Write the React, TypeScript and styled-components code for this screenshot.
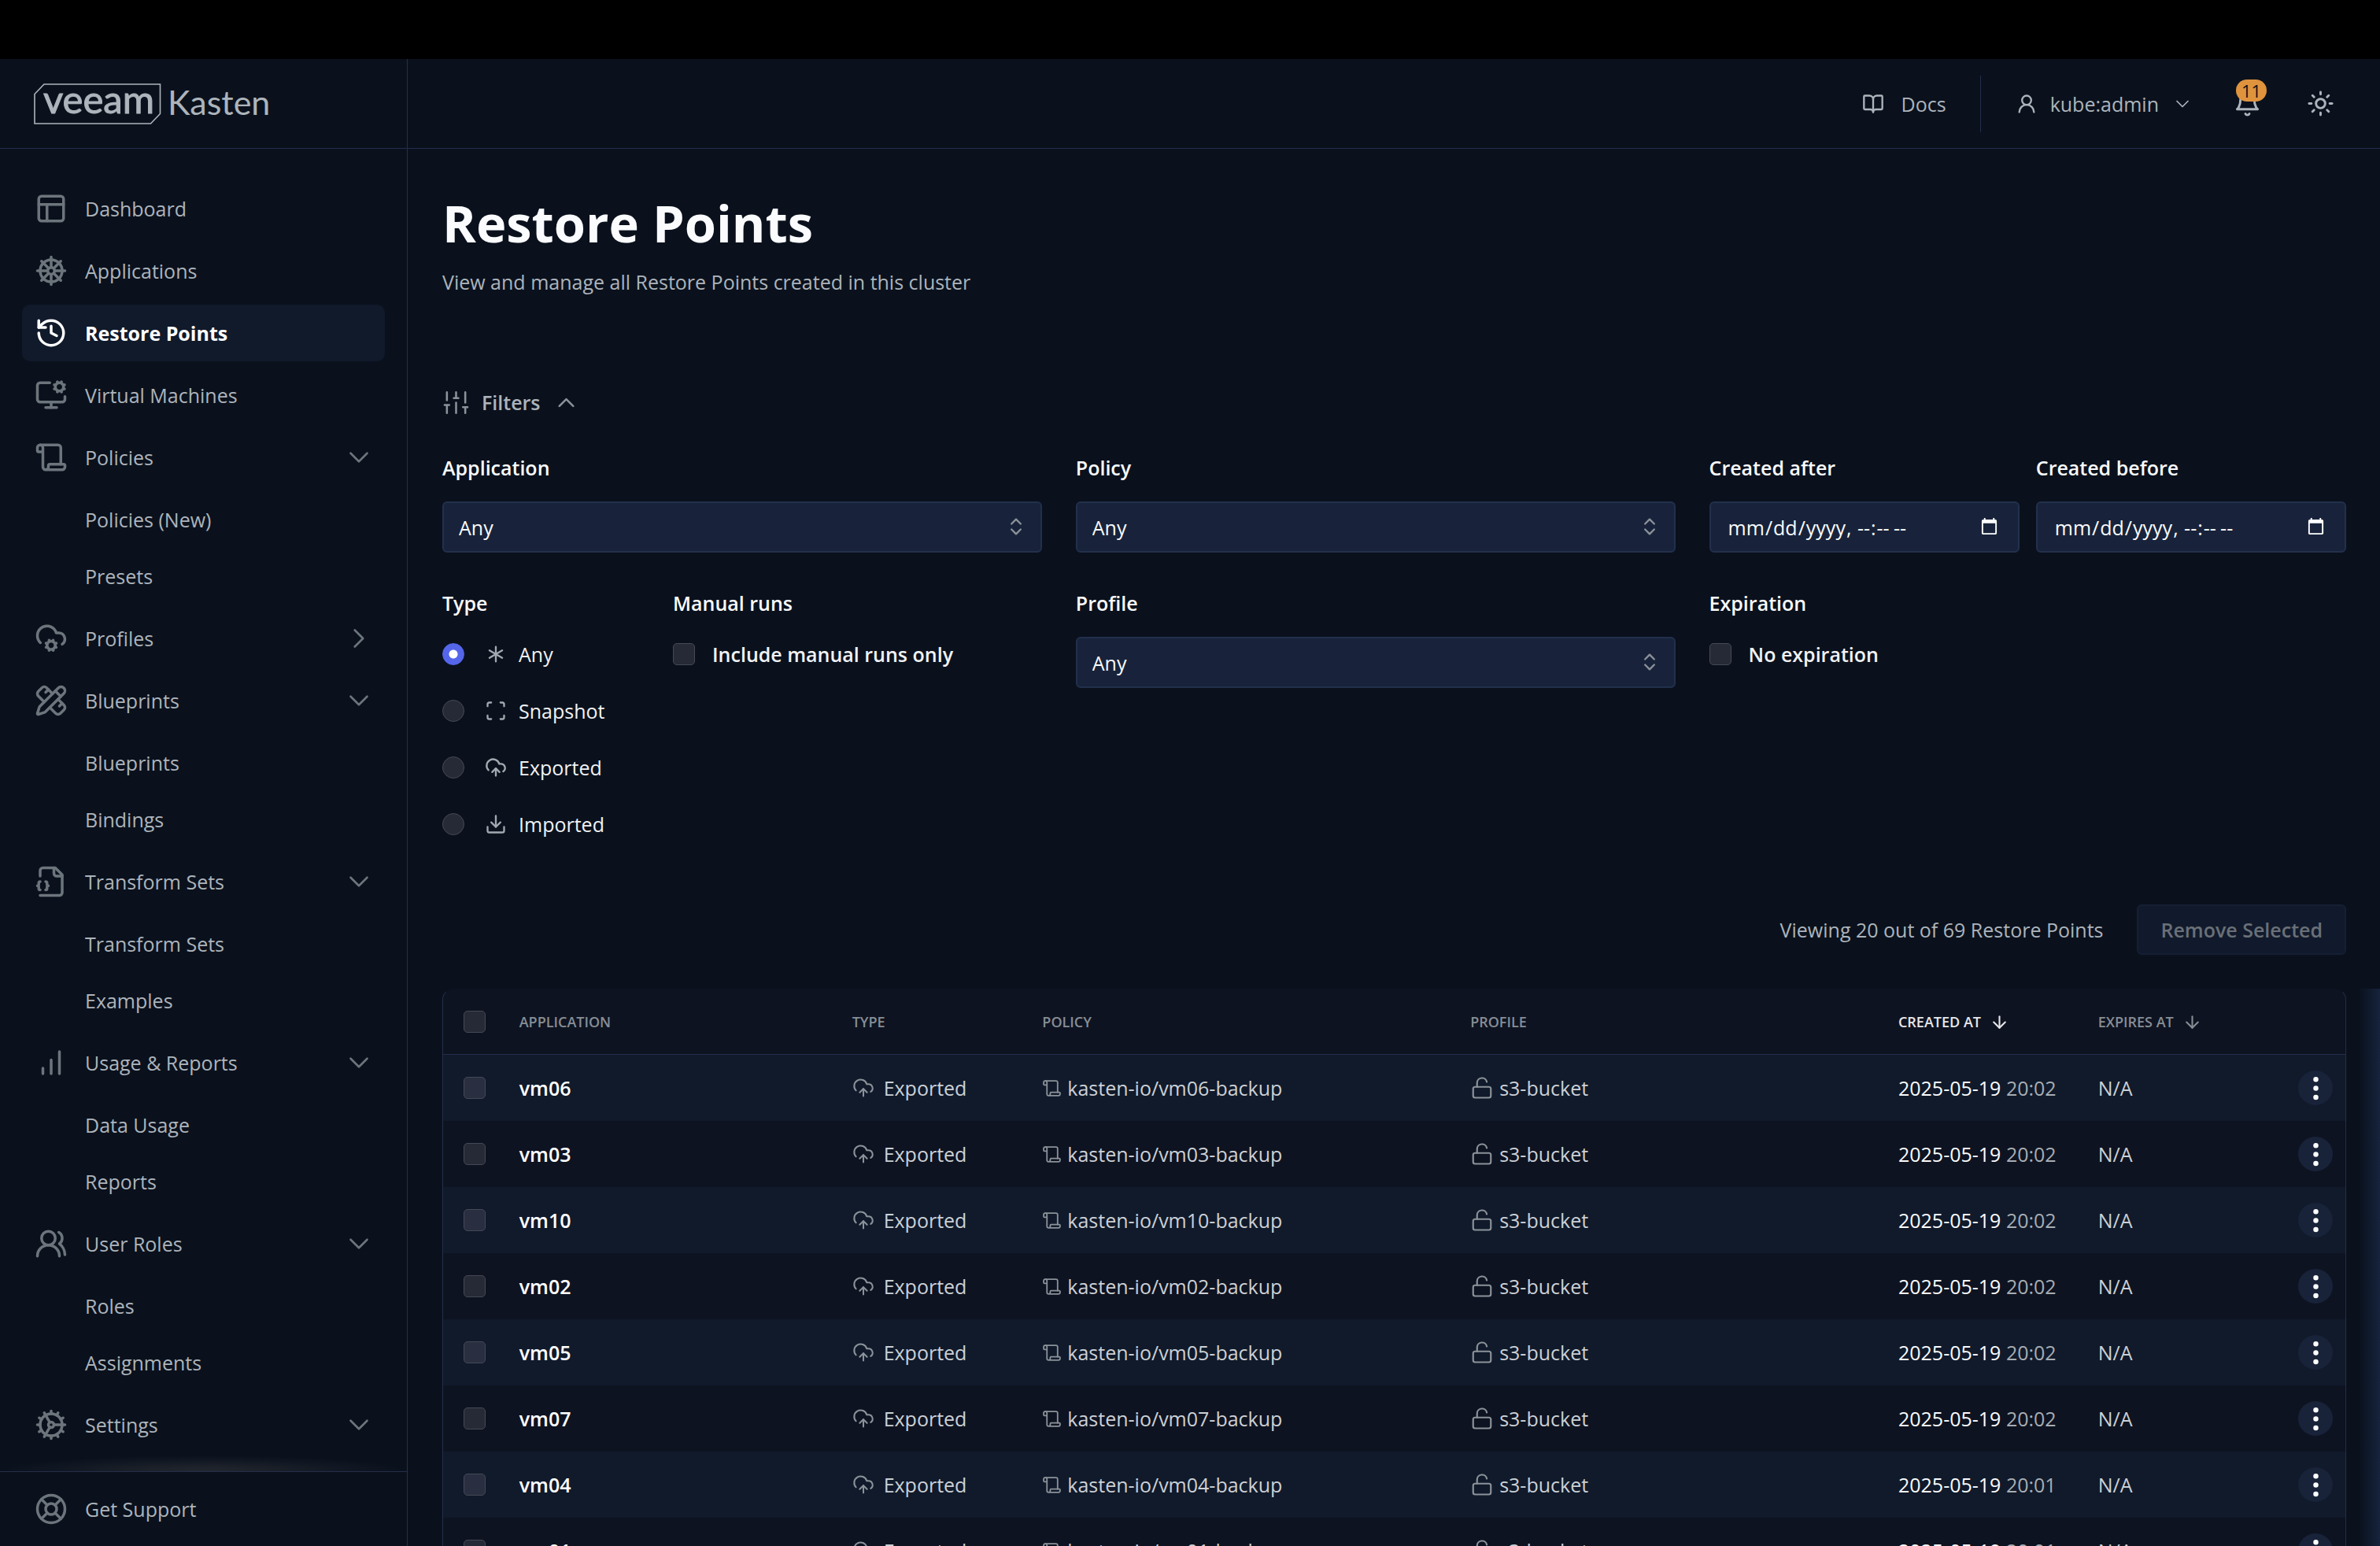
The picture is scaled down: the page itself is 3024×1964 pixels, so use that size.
import React from 'react';
import styled, { createGlobalStyle, css } from 'styled-components';
import {
  ArrowDown,
  BookOpen,
  ChevronDown,
  ChevronRight,
  ChevronUp,
  ChevronsUpDown,
  CloudCog,
  CloudUpload,
  Cog,
  Download,
  EllipsisVertical,
  History,
  LifeBuoy,
  LockOpen,
  MonitorCog,
  PanelsTopLeft,
  PencilRuler,
  Scan,
  Scroll,
  ShipWheel,
  Sun,
  UserRound,
  UsersRound,
} from 'lucide-react';

const color = {
  bg: '#0a111d',
  line: '#242e4a',
  text: '#adb4bb',
  muted: '#6d757c',
  white: '#fafbfc',
  field: '#18233b',
  fieldLine: '#22304c',
  active: '#101a2b',
  rowOdd: '#101a2b',
  rowEven: '#0e1321',
  box: '#262a36',
  boxLine: '#454955',
  badge: '#df933d',
  accent: '#5566ea',
};

const GlobalStyle = createGlobalStyle`
  *, *::before, *::after { box-sizing: border-box; }
  body {
    margin: 0;
    background: #000;
    color: ${color.text};
    font-family: 'Open Sans', 'Noto Sans', sans-serif;
    font-size: 25px;
    line-height: 36px;
  }
  button, input, select { font: inherit; color: inherit; }
  button { cursor: pointer; }
  a { color: inherit; text-decoration: none; }
  svg { display: block; flex: none; }
`;

/* ---------- shell ---------- */

const Shell = styled.div`
  display: grid;
  grid-template-columns: 518px minmax(0, 1fr);
  height: 100vh;
  padding-top: 75px;
  overflow: hidden;
`;

const Sidebar = styled.aside`
  display: flex;
  flex-direction: column;
  min-height: 0;
  background: ${color.bg};
  border-right: 1px solid ${color.line};
`;

const Page = styled.div`
  display: flex;
  flex-direction: column;
  min-width: 0;
  min-height: 0;
  background: ${color.bg};
`;

const bar = css`
  display: flex;
  flex: none;
  align-items: center;
  height: 114px;
  border-bottom: 1px solid ${color.line};
`;

const Brand = styled.a`
  ${bar}
  padding-left: 43px;
`;

const BrandText = styled.text`
  font-family: Lato, 'Open Sans', sans-serif;
  fill: ${color.text};
`;

/* ---------- navigation ---------- */

const Nav = styled.nav`
  flex: 1;
  min-height: 0;
  overflow: hidden;
  padding: 40px 28px 0;
  background: radial-gradient(closest-side, #23272f, transparent) 50% calc(100% + 20px) / 100% 40px no-repeat;
`;

const NavList = styled.ul`
  display: flex;
  flex-direction: column;
  gap: 7px;
  margin: 0;
  padding: 0;
  list-style: none;
`;

const SubList = styled.ul`
  margin: 7px 0 0;
  padding: 0;
  list-style: none;
`;

const NavLink = styled.a<{ $active?: boolean; $sub?: boolean }>`
  display: flex;
  align-items: center;
  gap: 22px;
  height: 72px;
  padding: 0 12px 0 ${(p) => (p.$sub ? '80px' : '16px')};
  border-radius: 10px;
  background: ${(p) => (p.$active ? color.active : 'transparent')};
  color: ${(p) => (p.$active ? '#fff' : color.text)};
  font-weight: ${(p) => (p.$active ? 700 : 400)};

  svg {
    color: ${(p) => (p.$active ? '#fff' : color.muted)};
  }
`;

const NavLabel = styled.span`
  flex: 1;
`;

const SidebarFooter = styled.div`
  flex: none;
  padding: 11px 28px;
  border-top: 1px solid ${color.line};
`;

/* ---------- top bar ---------- */

const TopBar = styled.header`
  ${bar}
  justify-content: flex-end;
  padding-right: 58px;
`;

const TopLink = styled.a`
  display: flex;
  align-items: center;
  gap: 22px;
  height: 72px;
  padding-right: 43px;
  border-right: 1px solid ${color.line};
`;

const BarButton = styled.button`
  display: flex;
  align-items: center;
  gap: 16px;
  padding: 0;
  border: 0;
  background: none;
`;

const UserButton = styled(BarButton)`
  margin: 0 51px 0 44px;
`;

const BellButton = styled(BarButton)`
  position: relative;
  margin-right: 58px;
`;

const Badge = styled.span`
  position: absolute;
  top: -13px;
  left: 3px;
  padding: 0 7px;
  border-radius: 14px;
  background: ${color.badge};
  color: #10131a;
  font-size: 22px;
  font-weight: 500;
  line-height: 28px;
`;

/* ---------- page content ---------- */

const Main = styled.main`
  flex: 1;
  min-height: 0;
  overflow: hidden;
  padding: 44px 43px 0 44px;
`;

const Title = styled.h1`
  margin: 0;
  color: ${color.white};
  font-size: 65px;
  line-height: 100px;
  font-weight: 700;
`;

const Subtitle = styled.p`
  margin: 7px 0 117px;
`;

const FiltersToggle = styled.button`
  display: flex;
  align-items: center;
  gap: 15px;
  padding: 0;
  border: 0;
  background: none;
  font-weight: 600;

  svg { color: #8b9299; }
`;

const FilterForm = styled.form`
  display: grid;
  grid-template-columns: minmax(0, 16fr) minmax(0, 16fr) minmax(0, 17fr);
  gap: 46px 43px;
  margin-top: 47px;
`;

const Pair = styled.div<{ $columns: string; $gap?: number }>`
  display: grid;
  grid-template-columns: ${(p) => p.$columns};
  gap: ${(p) => p.$gap ?? 0}px;
`;

const Field = styled.div`
  display: flex;
  flex-direction: column;
  min-width: 0;
`;

const fieldTitle = css`
  margin: 0 0 25px;
  padding: 0;
  color: ${color.white};
  font-weight: 600;
  line-height: 36px;
`;

const FieldLabel = styled.label`
  ${fieldTitle}
`;

const Group = styled.fieldset`
  margin: 0;
  padding: 0;
  border: 0;
`;

const Legend = styled.legend`
  ${fieldTitle}
  margin-bottom: 11px;
`;

const inputBox = css`
  width: 100%;
  height: 65px;
  border: 2px solid ${color.fieldLine};
  border-radius: 6px;
  background: ${color.field};
  color: ${color.white};
`;

const SelectWrap = styled.div`
  position: relative;

  svg {
    position: absolute;
    top: 18px;
    right: 19px;
    color: #8b9299;
    pointer-events: none;
  }
`;

const Select = styled.select`
  ${inputBox}
  appearance: none;
  padding: 0 60px 0 19px;
`;

const DateInput = styled.input`
  ${inputBox}
  padding: 0 22px 0 21px;
  color-scheme: dark;
`;

const Option = styled.label<{ $strong?: boolean }>`
  display: flex;
  align-items: center;
  height: 72px;
  gap: 22px;
  color: #f1f2f4;
  font-weight: ${(p) => (p.$strong ? 600 : 400)};
`;

const OptionText = styled.span`
  display: flex;
  align-items: center;
  gap: 15px;
  padding-left: 4px;

  svg { color: #a3a9b0; }
`;

const mark = css`
  flex: none;
  appearance: none;
  width: 28px;
  height: 28px;
  margin: 0;
  border: 1px solid ${color.boxLine};
  background: ${color.box};
`;

const Radio = styled.input`
  ${mark}
  border-radius: 50%;

  &:checked {
    border-color: ${color.accent};
    background: radial-gradient(circle, #fff 5px, ${color.accent} 6px);
  }
`;

const Checkbox = styled.input`
  ${mark}
  display: block;
  border-radius: 5px;
`;

const ResultsBar = styled.div`
  display: flex;
  align-items: center;
  justify-content: flex-end;
  gap: 43px;
  margin: 66px 0 43px;
`;

const RemoveButton = styled.button`
  height: 64px;
  padding: 0 28px;
  border: 2px solid #151f33;
  border-radius: 6px;
  background: #111a2c;
  color: #6a7078;
  font-weight: 600;
`;

/* ---------- table ---------- */

const TableArea = styled.section`
  margin-right: -43px;
  padding-right: 43px;
  background: linear-gradient(to left, #16233d, ${color.bg} 27px);
`;

const TableFrame = styled.div`
  overflow: hidden;
  border: 1px solid ${color.line};
  border-top-color: ${color.rowEven};
  border-radius: 14px 14px 0 0;
  background: ${color.rowEven};
`;

const Table = styled.table`
  width: 100%;
  table-layout: fixed;
  border-collapse: separate;
  border-spacing: 0;
  text-align: left;
`;

const Column = styled.col<{ $width: string }>`
  width: ${(p) => p.$width};
`;

const Th = styled.th<{ $current?: boolean }>`
  height: 83px;
  padding: 0;
  border-bottom: 1px solid ${color.line};
  color: ${(p) => (p.$current ? '#e6e8ea' : '#878e95')};
  font-size: 18px;
  font-weight: 600;
  text-transform: uppercase;
`;

const SortButton = styled.button`
  display: flex;
  align-items: center;
  gap: 11px;
  padding: 0;
  border: 0;
  background: none;
  text-transform: uppercase;
`;

const Row = styled.tr`
  background: ${color.rowEven};

  &:nth-child(odd) { background: ${color.rowOdd}; }
  &:nth-child(odd) input { background: #292e40; }
`;

const cell = css`
  height: 84px;
  padding: 0;
  white-space: nowrap;
`;

const Td = styled.td`
  ${cell}
  color: #ccd0d5;
`;

const CheckTd = styled.td`
  padding: 0 0 0 26px;
`;

const CheckTh = styled(Th)`
  padding-left: 26px;
`;

const NameTh = styled.th`
  ${cell}
  color: #fff;
  font-weight: 600;
`;

const IconText = styled.span<{ $gap: number }>`
  display: flex;
  align-items: center;
  gap: ${(p) => p.$gap}px;

  svg { color: #8b9299; }
`;

const DateText = styled.time`
  color: ${color.white};
`;

const TimeText = styled.span`
  color: #a7adb4;
`;

const RowMenu = styled.button`
  display: grid;
  place-items: center;
  width: 44px;
  height: 44px;
  margin: 0 16px 0 auto;
  padding: 0;
  border: 0;
  border-radius: 50%;
  background: #18233a;
  color: #fff;
`;

/* ---------- icons ---------- */

type IconProps = { size?: number };

const Glyph = ({ size = 42, stroke = 2, children }: IconProps & { stroke?: number; children: React.ReactNode }) => (
  <svg
    width={size}
    height={size}
    viewBox="0 0 24 24"
    fill="none"
    stroke="currentColor"
    strokeWidth={stroke}
    strokeLinecap="round"
    strokeLinejoin="round"
    aria-hidden="true"
  >
    {children}
  </svg>
);

const FileBraces = ({ size }: IconProps) => (
  <Glyph size={size}>
    <path d="M4 22h14a2 2 0 0 0 2-2V7l-5-5H6a2 2 0 0 0-2 2v4" />
    <path d="M14 2v4a2 2 0 0 0 2 2h4" />
    <path d="M4 12a1 1 0 0 0-1 1v1a1 1 0 0 1-1 1 1 1 0 0 1 1 1v1a1 1 0 0 0 1 1" />
    <path d="M8 18a1 1 0 0 0 1-1v-1a1 1 0 0 1 1-1 1 1 0 0 1-1-1v-1a1 1 0 0 0-1-1" />
  </Glyph>
);

const Bars = ({ size }: IconProps) => (
  <Glyph size={size}>
    <path d="M6 20v-4M12 20V10M18 20V4" />
  </Glyph>
);

const Sliders = ({ size }: IconProps) => (
  <Glyph size={size} stroke={1.75}>
    <path d="M4 21v-7M4 10V3M12 21v-9M12 8V3M20 21v-5M20 12V3M2 14h4M10 8h4M18 16h4" />
  </Glyph>
);

const Star = ({ size }: IconProps) => (
  <Glyph size={size}>
    <path d="M12 4v16M5.070 8l13.860 8M5.070 16l13.860-8" />
  </Glyph>
);

const BellIcon = ({ size }: IconProps) => (
  <Glyph size={size}>
    <path d="M6 8a6 6 0 0 1 12 0c0 7 3 9 3 9H3s3-2 3-9" />
    <path d="M10.3 21a1.94 1.94 0 0 0 3.4 0" />
  </Glyph>
);

const Logo = () => (
  <svg width="310" height="84" viewBox="0 -16 310 84" role="img" aria-label="veeam Kasten">
    <path d="M1 13.500 13 1h147.500v37.500L148.500 51H1z" fill="none" stroke={color.text} strokeWidth="1.6" />
    <BrandText x="12" y="38" fontSize="49" fontWeight="400" stroke={color.text} strokeWidth="1">veeam</BrandText>
    <BrandText x="170" y="40" fontSize="43" fontWeight="400">Kasten</BrandText>
  </svg>
);

/* ---------- data ---------- */

type NavEntry = {
  label: string;
  icon: React.ComponentType<{ size?: number }>;
  active?: boolean;
  closed?: boolean;
  open?: boolean;
  items?: string[];
};

const navigation: NavEntry[] = [
  { label: 'Dashboard', icon: PanelsTopLeft },
  { label: 'Applications', icon: ShipWheel },
  { label: 'Restore Points', icon: History, active: true },
  { label: 'Virtual Machines', icon: MonitorCog },
  { label: 'Policies', icon: Scroll, open: true, items: ['Policies (New)', 'Presets'] },
  { label: 'Profiles', icon: CloudCog, closed: true },
  { label: 'Blueprints', icon: PencilRuler, open: true, items: ['Blueprints', 'Bindings'] },
  { label: 'Transform Sets', icon: FileBraces, open: true, items: ['Transform Sets', 'Examples'] },
  { label: 'Usage & Reports', icon: Bars, open: true, items: ['Data Usage', 'Reports'] },
  { label: 'User Roles', icon: UsersRound, open: true, items: ['Roles', 'Assignments'] },
  { label: 'Settings', icon: Cog, open: true },
];

const types = [
  { label: 'Any', icon: Star },
  { label: 'Snapshot', icon: Scan },
  { label: 'Exported', icon: CloudUpload },
  { label: 'Imported', icon: Download },
];

const restorePoints = [
  { app: 'vm06', time: '20:02' },
  { app: 'vm03', time: '20:02' },
  { app: 'vm10', time: '20:02' },
  { app: 'vm02', time: '20:02' },
  { app: 'vm05', time: '20:02' },
  { app: 'vm07', time: '20:02' },
  { app: 'vm04', time: '20:01' },
  { app: 'vm01', time: '20:01' },
];

const columnWidths = ['4%', '17.5%', '10%', '22.5%', '22.5%', '10.5%', '8%', '5%'];

/* ---------- parts ---------- */

const SelectField = ({ id, label }: { id: string; label: string }) => (
  <Field>
    <FieldLabel htmlFor={id}>{label}</FieldLabel>
    <SelectWrap>
      <Select id={id} defaultValue="any">
        <option value="any">Any</option>
      </Select>
      <ChevronsUpDown size={28} />
    </SelectWrap>
  </Field>
);

const DateField = ({ id, label }: { id: string; label: string }) => (
  <Field>
    <FieldLabel htmlFor={id}>{label}</FieldLabel>
    <DateInput id={id} type="datetime-local" />
  </Field>
);

const CheckGroup = ({ title, label }: { title: string; label: string }) => (
  <Group>
    <Legend>{title}</Legend>
    <Option $strong>
      <Checkbox type="checkbox" />
      {label}
    </Option>
  </Group>
);

export default function App() {
  return (
    <>
      <GlobalStyle />
      <Shell>
        <Sidebar>
          <Brand href="#home">
            <Logo />
          </Brand>
          <Nav aria-label="Main">
            <NavList>
              {navigation.map(({ label, icon: Icon, active, open, closed, items }) => (
                <li key={label}>
                  <NavLink href="#" $active={active} aria-current={active ? 'page' : undefined}>
                    <Icon size={42} />
                    <NavLabel>{label}</NavLabel>
                    {open && <ChevronDown size={42} strokeWidth={1.5} />}
                    {closed && <ChevronRight size={42} strokeWidth={1.5} />}
                  </NavLink>
                  {items && (
                    <SubList>
                      {items.map((item) => (
                        <li key={item}>
                          <NavLink href="#" $sub>{item}</NavLink>
                        </li>
                      ))}
                    </SubList>
                  )}
                </li>
              ))}
            </NavList>
          </Nav>
          <SidebarFooter>
            <NavLink href="#support">
              <LifeBuoy size={42} />
              <NavLabel>Get Support</NavLabel>
            </NavLink>
          </SidebarFooter>
        </Sidebar>

        <Page>
          <TopBar>
            <TopLink href="#docs">
              <BookOpen size={28} />
              Docs
            </TopLink>
            <UserButton type="button">
              <UserRound size={28} />
              kube:admin
              <ChevronDown size={28} strokeWidth={1.5} />
            </UserButton>
            <BellButton type="button" aria-label="Notifications">
              <BellIcon size={35} />
              <Badge>11</Badge>
            </BellButton>
            <BarButton type="button" aria-label="Toggle theme">
              <Sun size={35} />
            </BarButton>
          </TopBar>

          <Main>
            <Title>Restore Points</Title>
            <Subtitle>View and manage all Restore Points created in this cluster</Subtitle>

            <FiltersToggle type="button" aria-expanded="true">
              <Sliders size={35} />
              Filters
              <ChevronUp size={35} strokeWidth={1.75} />
            </FiltersToggle>

            <FilterForm>
              <SelectField id="application" label="Application" />
              <SelectField id="policy" label="Policy" />
              <Pair $columns="1fr 1fr" $gap={21}>
                <DateField id="created-after" label="Created after" />
                <DateField id="created-before" label="Created before" />
              </Pair>

              <Pair $columns="5fr 8fr">
                <Group>
                  <Legend>Type</Legend>
                  {types.map(({ label, icon: Icon }, index) => (
                    <Option key={label}>
                      <Radio type="radio" name="type" defaultChecked={index === 0} />
                      <OptionText>
                        <Icon size={28} />
                        {label}
                      </OptionText>
                    </Option>
                  ))}
                </Group>
                <CheckGroup title="Manual runs" label="Include manual runs only" />
              </Pair>
              <SelectField id="profile" label="Profile" />
              <CheckGroup title="Expiration" label="No expiration" />
            </FilterForm>

            <ResultsBar>
              <span>Viewing 20 out of 69 Restore Points</span>
              <RemoveButton type="button" disabled>Remove Selected</RemoveButton>
            </ResultsBar>

            <TableArea>
              <TableFrame>
                <Table>
                  <colgroup>
                    {columnWidths.map((width, index) => (
                      <Column key={index} $width={width} />
                    ))}
                  </colgroup>
                  <thead>
                    <tr>
                      <CheckTh><Checkbox type="checkbox" aria-label="Select all" /></CheckTh>
                      <Th>Application</Th>
                      <Th>Type</Th>
                      <Th>Policy</Th>
                      <Th>Profile</Th>
                      <Th $current>
                        <SortButton type="button">Created at <ArrowDown size={25} /></SortButton>
                      </Th>
                      <Th>
                        <SortButton type="button">Expires at <ArrowDown size={25} /></SortButton>
                      </Th>
                      <Th aria-label="Actions" />
                    </tr>
                  </thead>
                  <tbody>
                    {restorePoints.map(({ app, time }) => (
                      <Row key={app}>
                        <CheckTd><Checkbox type="checkbox" aria-label={`Select ${app}`} /></CheckTd>
                        <NameTh scope="row">{app}</NameTh>
                        <Td>
                          <IconText $gap={12}><CloudUpload size={28} strokeWidth={1.75} />Exported</IconText>
                        </Td>
                        <Td>
                          <IconText $gap={7}><Scroll size={25} strokeWidth={1.75} />kasten-io/{app}-backup</IconText>
                        </Td>
                        <Td>
                          <IconText $gap={7}><LockOpen size={30} strokeWidth={1.75} />s3-bucket</IconText>
                        </Td>
                        <Td><DateText>2025-05-19</DateText> <TimeText>{time}</TimeText></Td>
                        <Td>N/A</Td>
                        <Td>
                          <RowMenu type="button" aria-label={`Actions for ${app}`}>
                            <EllipsisVertical size={39} fill="currentColor" />
                          </RowMenu>
                        </Td>
                      </Row>
                    ))}
                  </tbody>
                </Table>
              </TableFrame>
            </TableArea>
          </Main>
        </Page>
      </Shell>
    </>
  );
}
